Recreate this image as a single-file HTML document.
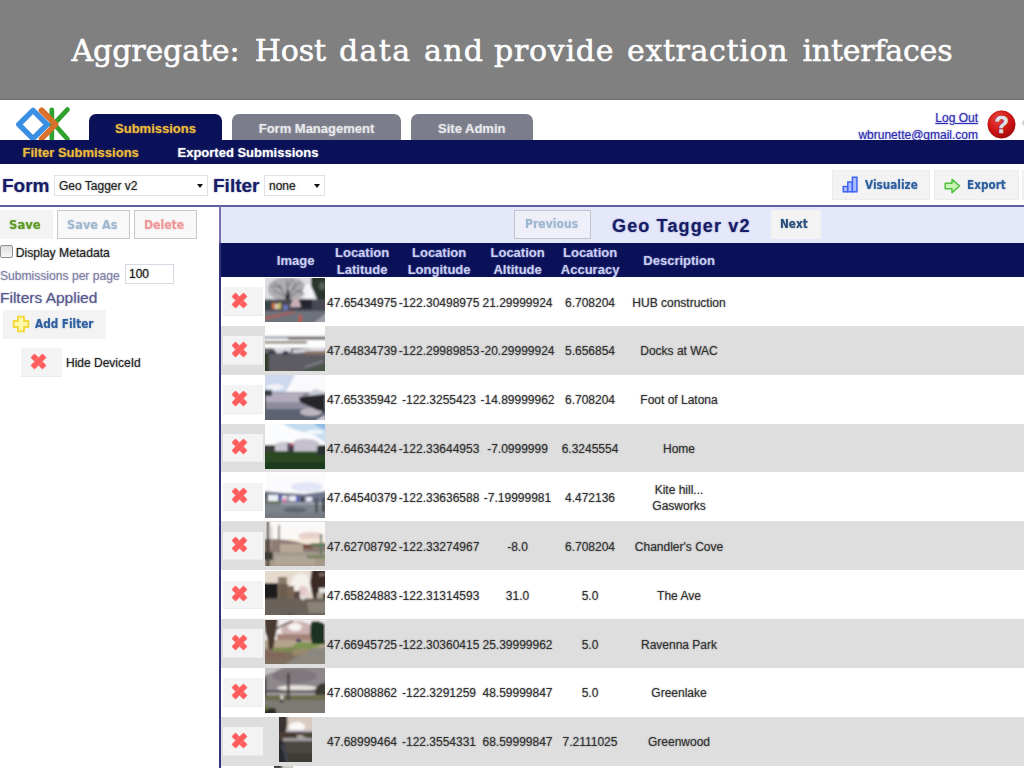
<!DOCTYPE html>
<html lang="en"><head><meta charset="utf-8"><title>Aggregate: Host data and provide extraction interfaces</title>
<style>
html,body{margin:0;padding:0;background:#fff;}
body{width:1024px;height:768px;overflow:hidden;font-family:"Liberation Sans",sans-serif;}
#slide{position:relative;width:1024px;height:768px;overflow:hidden;background:#fff;}
#slide *{box-sizing:border-box;}
.abs{position:absolute;}
#shot{position:absolute;left:0;top:0;width:1100px;height:840px;text-shadow:0 0 1.6px color-mix(in srgb,currentColor 55%,transparent);}
#hdr{position:absolute;left:0;top:0;width:1024px;height:100px;background:#808080;border-bottom:1px solid #6e6e6e;}
#title span{position:absolute;top:29px;color:#fff;font-family:"DejaVu Serif","Liberation Serif",serif;font-size:30px;line-height:44px;white-space:nowrap;-webkit-text-stroke:0.55px #fff;}
.tab{position:absolute;top:114px;height:27px;border-radius:7px 7px 0 0;color:#e9e9ec;background:#7b7d8b;font-weight:bold;font-size:13px;line-height:30px;text-align:center;}
.tab.sel{background:#0a1158;color:#eebb3a;}
#navbar{position:absolute;left:-20px;top:140px;width:1100px;height:24.3px;background:#0a1158;}
#navbar span{position:absolute;top:0;line-height:25px;font-size:13px;font-weight:bold;color:#fff;white-space:nowrap;}
#user{position:absolute;right:122px;top:109px;text-align:right;font-size:12px;line-height:16px;color:#2a2ab0;text-decoration:underline;white-space:nowrap;}
.biglbl{position:absolute;font-weight:bold;font-size:19px;line-height:22px;color:#161c66;white-space:nowrap;}
.sel{ }
.select{position:absolute;top:175px;height:21px;border:1px solid #e0e0e8;background:#fff;font-size:12px;line-height:20.4px;color:#222;padding-left:4px;white-space:nowrap;}
.select i{position:absolute;right:4px;top:8px;width:0;height:0;border-left:3.5px solid transparent;border-right:3.5px solid transparent;border-top:4px solid #111;}
.btn{position:absolute;background:#f3f3f3;font-family:"DejaVu Sans","Liberation Sans",sans-serif;font-weight:bold;font-size:12px;white-space:nowrap;}
.btn b{position:absolute;display:block;transform-origin:0 50%;transform:scaleX(0.875);font-weight:bold;}
#hline{position:absolute;left:-20px;top:205.3px;width:1100px;height:1.8px;background:#5c5ca0;}
#vline{position:absolute;left:219.1px;top:206px;width:2.1px;height:620px;background:linear-gradient(#7474b2 0,#7474b2 36px,#34347e 38px,#34347e 100%);}
#tnav{position:absolute;left:221px;top:207px;width:860px;height:36px;background:#e5e7fb;}
#thead{position:absolute;left:220.6px;top:242.6px;width:860px;height:34.6px;background:#0a1158;}
#thead span{position:absolute;transform:translateX(-50%);color:#c9cdf3;font-weight:bold;font-size:13px;line-height:17px;text-align:center;white-space:nowrap;}
.row{position:absolute;left:221px;width:860px;height:49px;background:#fff;}
.row.odd{background:#dedede;}
.del{position:absolute;left:2.4px;top:10.4px;width:40px;height:28.4px;background:#f3f3f3;border-bottom:1px solid #ebebeb;}
.xi{position:absolute;left:7.9px;top:4.5px;width:17px;height:17px;}
.ph{position:absolute;left:44.3px;top:0.6px;width:60px;height:44.6px;overflow:hidden;}
.ph9{left:57.5px;width:33.6px;}
.ph10{left:52.5px;width:19px;}
.ph svg{display:block;}
.c{position:absolute;top:17.6px;transform:translateX(-50%);font-size:12px;line-height:16px;color:#303030;white-space:nowrap;text-align:center;}
.c.two{top:9.2px;line-height:16.8px;}
.c1{left:141px;}.c2{left:218px;}.c3{left:296.5px;}.c4{left:369px;}.c5{left:458px;}
.lp{position:absolute;font-size:12px;line-height:16px;white-space:nowrap;color:#222;}

</style></head>
<body>
<div id="slide">
<div id="shot">

<svg class="abs" style="left:14px;top:104px" width="60" height="40" viewBox="0 0 60 40">
  <g fill="none" stroke-linecap="round" stroke-linejoin="round">
    <path d="M37.8 6 V35" stroke="#2fa12f" stroke-width="4.8"/>
    <path d="M53.4 5.6 L40 20 L53.4 35" stroke="#2fa12f" stroke-width="4.8"/>
    <path d="M27.6 6.4 L41.6 20.4 L27.6 34.6" stroke="#d9702b" stroke-width="5.6"/>
    <path d="M19 6.3 L33.2 20.5 L19 34.7 L4.8 20.5 Z" stroke="#3b8fe3" stroke-width="5.4"/>
    <path d="M27.6 6.4 L34 12.8" stroke="#d9702b" stroke-width="5.6"/>
  </g>
</svg>

<div class="tab sel" style="left:89px;width:133px">Submissions</div>
<div class="tab" style="left:232px;width:169px">Form Management</div>
<div class="tab" style="left:411px;width:121.5px">Site Admin</div>

<div id="user" style="top:110px;text-decoration:none"><span style="text-decoration:underline">Log Out</span><br><span style="position:relative;top:1.3px">wbrunette@gmail.com</span></div>
<svg class="abs" style="left:986.8px;top:110px" width="29" height="29" viewBox="0 0 29 29">
  <defs><radialGradient id="hg" cx="0.4" cy="0.3" r="0.75"><stop offset="0" stop-color="#f04a40"/><stop offset="0.6" stop-color="#d01414"/><stop offset="1" stop-color="#9c0a0a"/></radialGradient></defs>
  <circle cx="14.5" cy="14.5" r="13.7" fill="url(#hg)" stroke="#a81010" stroke-width="0.6"/>
  <text x="14.6" y="23" text-anchor="middle" font-family="Liberation Sans, sans-serif" font-weight="bold" font-size="23.5" fill="#f4f2ff" stroke="#f4f2ff" stroke-width="0.5">?</text>
</svg>
<div class="abs" style="left:1022px;top:119.5px;width:6px;height:6px;background:#d4d4d4;border-radius:3px"></div>

<div id="navbar"><span style="left:42.5px;color:#eebb3a">Filter Submissions</span><span style="left:197.5px">Exported Submissions</span></div>

<div class="biglbl" style="left:2px;top:175px">Form</div>
<div class="select" style="left:54px;width:154px">Geo Tagger v2<i></i></div>
<div class="biglbl" style="left:213px;top:175px">Filter</div>
<div class="select" style="left:264px;width:61px">none<i></i></div>

<div class="btn" style="left:832px;top:170px;width:98px;height:30px;border:1px solid #ececec">
  <svg class="abs" style="left:9px;top:5.2px" width="18" height="17" viewBox="0 0 18 17"><g fill="#a9bcff" stroke="#3a5ff0" stroke-width="1.4"><rect x="1.2" y="10.5" width="4.6" height="5.3"/><rect x="5.8" y="6" width="4.6" height="9.8"/><rect x="10.4" y="1.2" width="4.6" height="14.6"/></g></svg>
  <b style="left:32px;top:7px;line-height:15px;color:#2d5f9e">Visualize</b>
</div>
<div class="btn" style="left:934px;top:170px;width:85px;height:30px;border:1px solid #ececec">
  <svg class="abs" style="left:9px;top:7px" width="17" height="16" viewBox="0 0 17 16"><path d="M1.2 5.2 H8 V1.4 L15.6 8 L8 14.6 V10.8 H1.2 Z" fill="#c9f3b4" stroke="#4fc23c" stroke-width="1.5" stroke-linejoin="round"/></svg>
  <b style="left:32px;top:7px;line-height:15px;color:#2d5f9e">Export</b>
</div>
<div class="btn" style="left:1022px;top:170px;width:10px;height:30px;border:1px solid #ececec"></div>

<div id="hline"></div>
<div id="vline"></div>

<div class="btn" style="left:0;top:209.6px;width:52.8px;height:29.6px"><b style="left:9.4px;top:8.2px;line-height:15px;color:#5d9a28;transform:scaleX(0.97)">Save</b></div>
<div class="btn" style="left:56.6px;top:209.6px;width:73.3px;height:29.6px;border:1px solid #c9c9c9;background:#f8f8f8"><b style="left:9.6px;top:7.2px;line-height:15px;color:#9fb7cf;transform:scaleX(0.95)">Save As</b></div>
<div class="btn" style="left:133.8px;top:209.6px;width:62.9px;height:29.6px;border:1px solid #c9c9c9;background:#f8f8f8"><b style="left:9.6px;top:7.2px;line-height:15px;color:#ee9797;transform:scaleX(0.91)">Delete</b></div>

<div class="abs" style="left:0;top:245px;width:13px;height:13px;border:1px solid #8f8f8f;border-radius:2px;background:linear-gradient(#dedede,#f6f6f6)"></div>
<div class="lp" style="left:15.7px;top:245.2px;font-size:12.2px">Display Metadata</div>
<div class="lp" style="left:0;top:268px;color:#7d7da3;font-size:12.1px">Submissions per page</div>
<div class="abs" style="left:125px;top:264px;width:49px;height:20px;border:1px solid #d9d9e6;background:#fff;font-size:12px;line-height:19px;padding-left:3px;color:#111">100</div>
<div class="lp" style="left:0;top:288px;font-size:15.5px;line-height:20px;color:#55568c">Filters Applied</div>
<div class="btn" style="left:3px;top:309.5px;width:103px;height:29px">
  <svg class="abs" style="left:9px;top:5px" width="18" height="18" viewBox="0 0 18 18"><path d="M6 1.6 H12 V6 H16.4 V12 H12 V16.4 H6 V12 H1.6 V6 H6 Z" fill="#fff9a8" stroke="#f3d93c" stroke-width="1.9" stroke-linejoin="round"/></svg>
  <b style="left:32px;top:7px;line-height:15px;color:#2d5f9e">Add Filter</b>
</div>
<div class="abs" style="left:21px;top:348px;width:41px;height:29px;background:#f3f3f3;border-bottom:1px solid #ebebeb"><div class="abs" style="left:1.3px;top:0.1px"><svg class="xi" viewBox="0 0 17 17" width="17" height="17"><g transform="rotate(45 8.5 8.5)" fill="#ff5c5c" stroke="#ff8a8a" stroke-width="0.7"><rect x="0.2" y="5.8" width="16.6" height="5.4" rx="0.9"/><rect x="5.8" y="0.2" width="5.4" height="16.6" rx="0.9"/></g><rect x="6" y="6" width="5" height="5" transform="rotate(45 8.5 8.5)" fill="#ff5c5c"/></svg></div></div>
<div class="lp" style="left:66px;top:355px">Hide DeviceId</div>

<div id="tnav"></div>
<div class="btn" style="left:514px;top:210px;width:77px;height:29px;border:1px solid #c4c4cc;background:#eeeff9"><b style="left:9.6px;top:6.4px;line-height:15px;color:#9fb7cf;transform:scaleX(0.905)">Previous</b></div>
<div class="biglbl" style="left:612px;top:215px;font-size:18px;letter-spacing:1.15px">Geo Tagger v2</div>
<div class="btn" style="left:771px;top:210px;width:50px;height:29px"><b style="left:9px;top:7px;line-height:15px;color:#2c4f7c">Next</b></div>

<div id="thead">
  <span style="left:75px;top:9.5px">Image</span>
  <span style="left:141.5px;top:1px">Location<br>Latitude</span>
  <span style="left:218.5px;top:1px">Location<br>Longitude</span>
  <span style="left:297px;top:1px">Location<br>Altitude</span>
  <span style="left:369.5px;top:1px">Location<br>Accuracy</span>
  <span style="left:458.5px;top:9.5px">Description</span>
</div>
<div id="rows">
<div class="row" style="top:277.00px"><div class="del"><svg class="xi" viewBox="0 0 17 17" width="17" height="17"><g transform="rotate(45 8.5 8.5)" fill="#ff5c5c" stroke="#ff8a8a" stroke-width="0.7"><rect x="0.2" y="5.8" width="16.6" height="5.4" rx="0.9"/><rect x="5.8" y="0.2" width="5.4" height="16.6" rx="0.9"/></g><rect x="6" y="6" width="5" height="5" transform="rotate(45 8.5 8.5)" fill="#ff5c5c"/></svg></div><div class="ph ph0"><svg width="60" height="45" viewBox="0 0 60 45"><g filter="url(#pb)"><rect x="-3" y="-3" width="66" height="51" fill="#dcdce2"/><ellipse cx="22" cy="11" rx="19" ry="12" fill="#8a878c" opacity=".55"/><ellipse cx="44" cy="14" rx="6" ry="8" fill="#f4f4f8"/><g stroke="#4c484c" stroke-width="0.9" fill="none" opacity=".8"><path d="M23 23 L14 6"/><path d="M23 22 L22 2"/><path d="M23 22 L31 4"/><path d="M23 20 L8 12"/><path d="M24 20 L38 10"/><path d="M18 13 L9 4"/><path d="M27 13 L36 3"/><path d="M22 10 L28 1"/><path d="M15 9 L5 8"/><path d="M30 12 L40 16"/></g><path d="M46 -2 H62 V26 H54 Q50 16 46 8 Z" fill="#2a342e"/><ellipse cx="57" cy="8" rx="3" ry="4" fill="#56605a"/><path d="M22 12 L24 12 L25 25 L20 25 Z" fill="#2c282a"/><rect x="-2" y="21.5" width="64" height="13" fill="#4a4a52"/><rect x="33" y="21" width="14" height="10" fill="#262630"/><path d="M25 29 L28 21 L33 19 L36 29 Z" fill="#c8b0b8"/><rect x="7" y="25" width="3" height="6" fill="#c8703c"/><rect x="10" y="26" width="3" height="5" fill="#d8d0c4"/><rect x="13" y="25" width="3" height="6" fill="#c4b450"/><rect x="18" y="27" width="5" height="5" fill="#6c74b4"/><rect x="-2" y="22" width="8" height="9" fill="#3a4444"/><rect x="-2" y="33" width="64" height="14" fill="#6e727a"/><path d="M-1 39 L30 33 L30 35 L-1 42 Z" fill="#a85e5e"/><rect x="34" y="37" width="2.4" height="9" fill="#d2503c"/><path d="M48 46 L62 34 V46 Z" fill="#a0a0aa"/></g></svg></div><span class="c c1">47.65434975</span><span class="c c2">-122.30498975</span><span class="c c3">21.29999924</span><span class="c c4">6.708204</span><span class="c c5">HUB construction</span></div>
<div class="row odd" style="top:325.86px"><div class="del"><svg class="xi" viewBox="0 0 17 17" width="17" height="17"><g transform="rotate(45 8.5 8.5)" fill="#ff5c5c" stroke="#ff8a8a" stroke-width="0.7"><rect x="0.2" y="5.8" width="16.6" height="5.4" rx="0.9"/><rect x="5.8" y="0.2" width="5.4" height="16.6" rx="0.9"/></g><rect x="6" y="6" width="5" height="5" transform="rotate(45 8.5 8.5)" fill="#ff5c5c"/></svg></div><div class="ph ph1"><svg width="60" height="45" viewBox="0 0 60 45"><g filter="url(#pb)"><rect x="-3" y="-3" width="66" height="51" fill="#fdfdfd"/><rect x="-2" y="10" width="26" height="3" fill="#a8b0c0"/><rect x="23" y="10.5" width="39" height="3.2" fill="#6e666a"/><rect x="-2" y="15" width="44" height="2.6" fill="#8e8474"/><rect x="-2" y="22" width="64" height="8" fill="#6a666c"/><path d="M8 22 L26 21 L26 26 L12 27 Z" fill="#d8d8e0"/><path d="M28 24 L60 21 V25 L28 27 Z" fill="#dcdce4"/><rect x="40" y="25" width="20" height="4" fill="#8c7468"/><rect x="4" y="25" width="6" height="3" fill="#2a3448"/><rect x="18" y="25" width="5" height="4" fill="#2c3048"/><rect x="-2" y="28.5" width="64" height="19" fill="#5c5c62"/><rect x="-2" y="27" width="6" height="20" fill="#2e3e2c"/><path d="M34 46 L62 38 V46 Z" fill="#465444"/><path d="M40 41 L58 35" stroke="#9a9aa0" stroke-width="1" fill="none"/></g></svg></div><span class="c c1">47.64834739</span><span class="c c2">-122.29989853</span><span class="c c3">-20.29999924</span><span class="c c4">5.656854</span><span class="c c5">Docks at WAC</span></div>
<div class="row" style="top:374.72px"><div class="del"><svg class="xi" viewBox="0 0 17 17" width="17" height="17"><g transform="rotate(45 8.5 8.5)" fill="#ff5c5c" stroke="#ff8a8a" stroke-width="0.7"><rect x="0.2" y="5.8" width="16.6" height="5.4" rx="0.9"/><rect x="5.8" y="0.2" width="5.4" height="16.6" rx="0.9"/></g><rect x="6" y="6" width="5" height="5" transform="rotate(45 8.5 8.5)" fill="#ff5c5c"/></svg></div><div class="ph ph2"><svg width="60" height="45" viewBox="0 0 60 45"><g filter="url(#pb)"><rect x="-3" y="-3" width="66" height="51" fill="#fafafc"/><path d="M-2 -2 H30 Q26 10 20 17 H-2 Z" fill="#cdd8ee"/><ellipse cx="10" cy="12" rx="9" ry="3" fill="#f2f2f8"/><rect x="-2" y="17" width="64" height="30" fill="#8e8c9c"/><rect x="-2" y="18" width="40" height="9" fill="#b4acbc"/><rect x="-2" y="34" width="64" height="13" fill="#5c6272"/><ellipse cx="46" cy="37" rx="11" ry="4" fill="#bdb6c0"/><path d="M-2 15 H7 V21 H-2 Z" fill="#3a3a42"/><path d="M44 18 L50 14 L60 17 V22 H44 Z" fill="#c8ccd6"/><path d="M34 22 L60 19 V37 L52 35 L35 27 Z" fill="#26262c"/><path d="M50 46 L60 40 V46 Z" fill="#d2d2da"/><rect x="-2" y="20" width="3" height="14" fill="#4a4e5c"/></g></svg></div><span class="c c1">47.65335942</span><span class="c c2">-122.3255423</span><span class="c c3">-14.89999962</span><span class="c c4">6.708204</span><span class="c c5">Foot of Latona</span></div>
<div class="row odd" style="top:423.58px"><div class="del"><svg class="xi" viewBox="0 0 17 17" width="17" height="17"><g transform="rotate(45 8.5 8.5)" fill="#ff5c5c" stroke="#ff8a8a" stroke-width="0.7"><rect x="0.2" y="5.8" width="16.6" height="5.4" rx="0.9"/><rect x="5.8" y="0.2" width="5.4" height="16.6" rx="0.9"/></g><rect x="6" y="6" width="5" height="5" transform="rotate(45 8.5 8.5)" fill="#ff5c5c"/></svg></div><div class="ph ph3"><svg width="60" height="45" viewBox="0 0 60 45"><g filter="url(#pb)"><rect x="-3" y="-3" width="66" height="51" fill="#fbfcfe"/><path d="M16 -2 H62 V20 Q50 10 40 8 Q26 6 16 -2 Z" fill="#c4dcf0"/><path d="M48 -2 H62 V6 Q54 5 48 -2 Z" fill="#8fbde6"/><ellipse cx="50" cy="8" rx="9" ry="2.5" fill="#f2f6fa"/><rect x="-2" y="21" width="64" height="8" fill="#3c403e"/><path d="M10 27 V20 Q18 16 26 19 V27 Z" fill="#c9c6d2"/><path d="M29 28 V17 Q42 12 54 18 V28 Z" fill="#c4c0cc"/><rect x="22.5" y="19" width="6" height="8" fill="#4c3c54"/><rect x="25" y="19" width="3" height="3" fill="#c05068"/><rect x="-2" y="27.5" width="64" height="20" fill="#2a4824"/><rect x="-2" y="38" width="64" height="10" fill="#1f3a1c"/><rect x="52" y="22" width="10" height="9" fill="#2a3230"/></g></svg></div><span class="c c1">47.64634424</span><span class="c c2">-122.33644953</span><span class="c c3">-7.0999999</span><span class="c c4">6.3245554</span><span class="c c5">Home</span></div>
<div class="row" style="top:472.44px"><div class="del"><svg class="xi" viewBox="0 0 17 17" width="17" height="17"><g transform="rotate(45 8.5 8.5)" fill="#ff5c5c" stroke="#ff8a8a" stroke-width="0.7"><rect x="0.2" y="5.8" width="16.6" height="5.4" rx="0.9"/><rect x="5.8" y="0.2" width="5.4" height="16.6" rx="0.9"/></g><rect x="6" y="6" width="5" height="5" transform="rotate(45 8.5 8.5)" fill="#ff5c5c"/></svg></div><div class="ph ph4"><svg width="60" height="45" viewBox="0 0 60 45"><g filter="url(#pb)"><rect x="-3" y="-3" width="66" height="51" fill="#fbfbfd"/><ellipse cx="42" cy="14" rx="16" ry="5" fill="#e2e6f6"/><path d="M-2 18 L20 20 L40 21 L62 18 V30 H-2 Z" fill="#70768c"/><rect x="3" y="22" width="10" height="6" fill="#eef0f8"/><rect x="17" y="23" width="5" height="5" fill="#ecebf4"/><rect x="24" y="23" width="7" height="5" fill="#ecebf4"/><rect x="41" y="24" width="6" height="4.5" fill="#e6e8f2"/><rect x="1" y="21" width="2" height="6" fill="#34343c"/><rect x="14" y="22" width="2.4" height="5" fill="#3c4cb0"/><rect x="31" y="23" width="2.4" height="6" fill="#4450c0"/><rect x="18.4" y="25" width="2.2" height="5" fill="#e04890"/><rect x="36" y="24" width="2.4" height="5" fill="#2c2c34"/><rect x="-2" y="28" width="18" height="3.4" fill="#5e6e54"/><rect x="-2" y="30.5" width="64" height="17" fill="#7e848c"/><ellipse cx="30" cy="37" rx="12" ry="2.4" fill="#5e6470"/><rect x="50" y="25" width="3" height="15" fill="#4c5458"/><rect x="57" y="25" width="3" height="14" fill="#3e4248"/><rect x="-2" y="40" width="64" height="7" fill="#747a82"/></g></svg></div><span class="c c1">47.64540379</span><span class="c c2">-122.33636588</span><span class="c c3">-7.19999981</span><span class="c c4">4.472136</span><span class="c c5 two">Kite hill...<br>Gasworks</span></div>
<div class="row odd" style="top:521.30px"><div class="del"><svg class="xi" viewBox="0 0 17 17" width="17" height="17"><g transform="rotate(45 8.5 8.5)" fill="#ff5c5c" stroke="#ff8a8a" stroke-width="0.7"><rect x="0.2" y="5.8" width="16.6" height="5.4" rx="0.9"/><rect x="5.8" y="0.2" width="5.4" height="16.6" rx="0.9"/></g><rect x="6" y="6" width="5" height="5" transform="rotate(45 8.5 8.5)" fill="#ff5c5c"/></svg></div><div class="ph ph5"><svg width="60" height="45" viewBox="0 0 60 45"><g filter="url(#pb)"><rect x="-3" y="-3" width="66" height="51" fill="#fbf9f7"/><ellipse cx="46" cy="14" rx="13" ry="4" fill="#e8d2ca"/><rect x="20" y="17" width="42" height="4" fill="#f6ead8"/><path d="M-2 17 L10 17 Q28 18 40 22 L62 22 V32 H-2 Z" fill="#8e7c74"/><rect x="14" y="22" width="24" height="8" fill="#b8a898"/><rect x="38" y="22" width="10" height="5" fill="#7c5242"/><rect x="46" y="21" width="16" height="4" fill="#6c7a5c"/><rect x="-2" y="30" width="64" height="17" fill="#a49a8c"/><rect x="10" y="34" width="40" height="9" fill="#b0a698"/><rect x="42" y="33" width="20" height="3.4" fill="#7c8460"/><rect x="1.6" y="-2" width="2.6" height="49" fill="#3a3028"/><rect x="13" y="3" width="1.8" height="28" fill="#84786e"/><rect x="6" y="4" width="1" height="22" fill="#a89c94"/><rect x="55" y="12" width="2" height="21" fill="#5c7c6a"/><rect x="-2" y="30" width="10" height="8" fill="#3c3c36"/></g></svg></div><span class="c c1">47.62708792</span><span class="c c2">-122.33274967</span><span class="c c3">-8.0</span><span class="c c4">6.708204</span><span class="c c5">Chandler's Cove</span></div>
<div class="row" style="top:570.16px"><div class="del"><svg class="xi" viewBox="0 0 17 17" width="17" height="17"><g transform="rotate(45 8.5 8.5)" fill="#ff5c5c" stroke="#ff8a8a" stroke-width="0.7"><rect x="0.2" y="5.8" width="16.6" height="5.4" rx="0.9"/><rect x="5.8" y="0.2" width="5.4" height="16.6" rx="0.9"/></g><rect x="6" y="6" width="5" height="5" transform="rotate(45 8.5 8.5)" fill="#ff5c5c"/></svg></div><div class="ph ph6"><svg width="60" height="45" viewBox="0 0 60 45"><g filter="url(#pb)"><rect x="-3" y="-3" width="66" height="51" fill="#e6dace"/><ellipse cx="36" cy="14" rx="10" ry="12" fill="#f4f0ec"/><ellipse cx="38" cy="20" rx="5" ry="5" fill="#e4c8cc"/><rect x="-2" y="12" width="16" height="17" fill="#1b1b1e"/><rect x="13" y="6" width="9" height="22" fill="#8a7a68"/><rect x="14" y="13" width="9" height="15" fill="#6a5c50"/><rect x="22" y="15" width="7" height="13" fill="#7a6654"/><rect x="29" y="20" width="6" height="8" fill="#5a4c48"/><path d="M47 -2 H62 V31 H49 L45 12 Z" fill="#3a2a26"/><rect x="54" y="17" width="8" height="5" fill="#e6e2de"/><rect x="52" y="22" width="6" height="7" fill="#b0a898"/><rect x="54" y="2" width="6" height="3" fill="#7a6c64"/><rect x="-2" y="27.5" width="64" height="20" fill="#6a625a"/><path d="M42 31 H62 V42 H44 Z" fill="#8a8278"/><ellipse cx="38" cy="27.5" rx="2" ry="1.6" fill="#dcd8d8"/><rect x="22" y="43.6" width="6" height="2" fill="#3a3632"/></g></svg></div><span class="c c1">47.65824883</span><span class="c c2">-122.31314593</span><span class="c c3">31.0</span><span class="c c4">5.0</span><span class="c c5">The Ave</span></div>
<div class="row odd" style="top:619.02px"><div class="del"><svg class="xi" viewBox="0 0 17 17" width="17" height="17"><g transform="rotate(45 8.5 8.5)" fill="#ff5c5c" stroke="#ff8a8a" stroke-width="0.7"><rect x="0.2" y="5.8" width="16.6" height="5.4" rx="0.9"/><rect x="5.8" y="0.2" width="5.4" height="16.6" rx="0.9"/></g><rect x="6" y="6" width="5" height="5" transform="rotate(45 8.5 8.5)" fill="#ff5c5c"/></svg></div><div class="ph ph7"><svg width="60" height="45" viewBox="0 0 60 45"><g filter="url(#pb)"><rect x="-3" y="-3" width="66" height="51" fill="#f4eeee"/><ellipse cx="32" cy="10" rx="16" ry="9" fill="#c4a8a6" opacity=".85"/><ellipse cx="30" cy="7" rx="7" ry="4" fill="#f6f2f2"/><rect x="12" y="14" width="34" height="7" fill="#a4847a"/><rect x="-2" y="20" width="64" height="10" fill="#b4a48c"/><path d="M22 30 L34 22 L58 24 L46 30 Z" fill="#7e9452"/><rect x="31" y="19" width="5" height="3" fill="#3c3c6c"/><path d="M46 2 Q52 -1 60 4 V24 H47 Q44 12 46 2 Z" fill="#1e3022"/><path d="M-1 -2 H13 Q12 10 10 18 Q9 26 8 30 H3 Q4 20 0 12 Z" fill="#4a3a30"/><path d="M10 10 Q18 4 28 1" stroke="#5a4840" stroke-width="1.6" fill="none"/><rect x="-2" y="29" width="44" height="18" fill="#7e6e5c"/><path d="M8 28 L28 27 L26 32 L8 32 Z" fill="#7a8a50"/><path d="M16 47 L44 29 L62 27 V47 Z" fill="#8c8880"/><path d="M27 30 L42 28 V33 L28 36 Z" fill="#9a8c6c"/><rect x="-2" y="32" width="22" height="6" fill="#84625c" opacity=".7"/></g></svg></div><span class="c c1">47.66945725</span><span class="c c2">-122.30360415</span><span class="c c3">25.39999962</span><span class="c c4">5.0</span><span class="c c5">Ravenna Park</span></div>
<div class="row" style="top:667.88px"><div class="del"><svg class="xi" viewBox="0 0 17 17" width="17" height="17"><g transform="rotate(45 8.5 8.5)" fill="#ff5c5c" stroke="#ff8a8a" stroke-width="0.7"><rect x="0.2" y="5.8" width="16.6" height="5.4" rx="0.9"/><rect x="5.8" y="0.2" width="5.4" height="16.6" rx="0.9"/></g><rect x="6" y="6" width="5" height="5" transform="rotate(45 8.5 8.5)" fill="#ff5c5c"/></svg></div><div class="ph ph8"><svg width="60" height="45" viewBox="0 0 60 45"><g filter="url(#pb)"><rect x="-3" y="-3" width="66" height="51" fill="#8e888c"/><path d="M-2 -2 H20 Q10 4 -2 8 Z" fill="#c4c0c4"/><ellipse cx="30" cy="8" rx="22" ry="7" fill="#7a7478" opacity=".8"/><ellipse cx="32" cy="20" rx="20" ry="2.8" fill="#e6e2de"/><rect x="-2" y="22.4" width="64" height="2.2" fill="#484242"/><rect x="-2" y="24.6" width="64" height="3" fill="#9e9ea0"/><rect x="-2" y="27.4" width="64" height="5" fill="#6a6a48"/><rect x="-2" y="32" width="64" height="15" fill="#7c7a72"/><rect x="22" y="5" width="2.6" height="27" fill="#4a4040"/><rect x="-2" y="10" width="3.4" height="18" fill="#4c4646"/><path d="M50 27 Q50 16 58 15 H62 V27 Z" fill="#3a3a30"/><rect x="15.6" y="27" width="2.6" height="5" fill="#e6dede"/><rect x="15" y="31.6" width="3.4" height="2.6" fill="#34302e"/><path d="M-2 40 H10 Q12 44 11 47 H-2 Z" fill="#2a2a28"/><rect x="-2" y="38" width="5" height="4" fill="#5e6e3a"/></g></svg></div><span class="c c1">47.68088862</span><span class="c c2">-122.3291259</span><span class="c c3">48.59999847</span><span class="c c4">5.0</span><span class="c c5">Greenlake</span></div>
<div class="row odd" style="top:716.74px"><div class="del"><svg class="xi" viewBox="0 0 17 17" width="17" height="17"><g transform="rotate(45 8.5 8.5)" fill="#ff5c5c" stroke="#ff8a8a" stroke-width="0.7"><rect x="0.2" y="5.8" width="16.6" height="5.4" rx="0.9"/><rect x="5.8" y="0.2" width="5.4" height="16.6" rx="0.9"/></g><rect x="6" y="6" width="5" height="5" transform="rotate(45 8.5 8.5)" fill="#ff5c5c"/></svg></div><div class="ph ph9"><svg width="34" height="45" viewBox="0 0 34 45"><g filter="url(#pb)"><rect x="-3" y="-3" width="40" height="51" fill="#d8ccc0"/><ellipse cx="18" cy="10" rx="8" ry="5" fill="#fbf9f7"/><rect x="6" y="13" width="30" height="3.4" fill="#bcb4c4"/><path d="M-2 -2 H8 Q9 8 7 14 Q5 20 -2 22 Z" fill="#3a3230"/><rect x="-2" y="15" width="38" height="10" fill="#4c3a34"/><rect x="18" y="18" width="9" height="6" fill="#aca49c"/><rect x="24" y="15" width="12" height="5" fill="#4c4c3a"/><rect x="4" y="21" width="30" height="3.4" fill="#9c9a9a"/><rect x="-2" y="24.4" width="38" height="23" fill="#4c4842"/><rect x="-2" y="36" width="38" height="12" fill="#3c3a36"/><path d="M-2 24 H4 Q8 34 9 47 H-2 Z" fill="#2a2a2e"/><path d="M3 28 Q7 36 8 46" stroke="#4c5466" stroke-width="1.6" fill="none"/></g></svg></div><span class="c c1">47.68999464</span><span class="c c2">-122.3554331</span><span class="c c3">68.59999847</span><span class="c c4">7.2111025</span><span class="c c5">Greenwood</span></div>
<div class="row" style="top:765.60px"><div class="ph ph10"><svg width="20" height="45" viewBox="0 0 20 45"><g filter="url(#pb)"><rect x="-3" y="-3" width="26" height="51" fill="#b8b4b0"/><rect x="-2" y="-2" width="10" height="5" fill="#3a3a34"/><rect x="9" y="-2" width="12" height="4" fill="#d8d4d0"/></g></svg>
</div></div>
</div>
</div>
<div id="hdr"><div id="title"><span style="left:71.5px;letter-spacing:-0.12px">Aggregate: </span><span style="left:254.7px;letter-spacing:-0.13px">Host </span><span style="left:339.0px;letter-spacing:1.33px">data </span><span style="left:424.0px;letter-spacing:1.3px">and </span><span style="left:494.0px;letter-spacing:0.73px">provide </span><span style="left:627.0px;letter-spacing:0.63px">extraction </span><span style="left:802.5px;letter-spacing:-0.22px">interfaces </span></div></div>
<svg width="0" height="0" style="position:absolute"><defs><filter id="pb" x="-10%" y="-10%" width="120%" height="120%"><feGaussianBlur stdDeviation="0.9"/></filter></defs></svg>

</div>
</body></html>
